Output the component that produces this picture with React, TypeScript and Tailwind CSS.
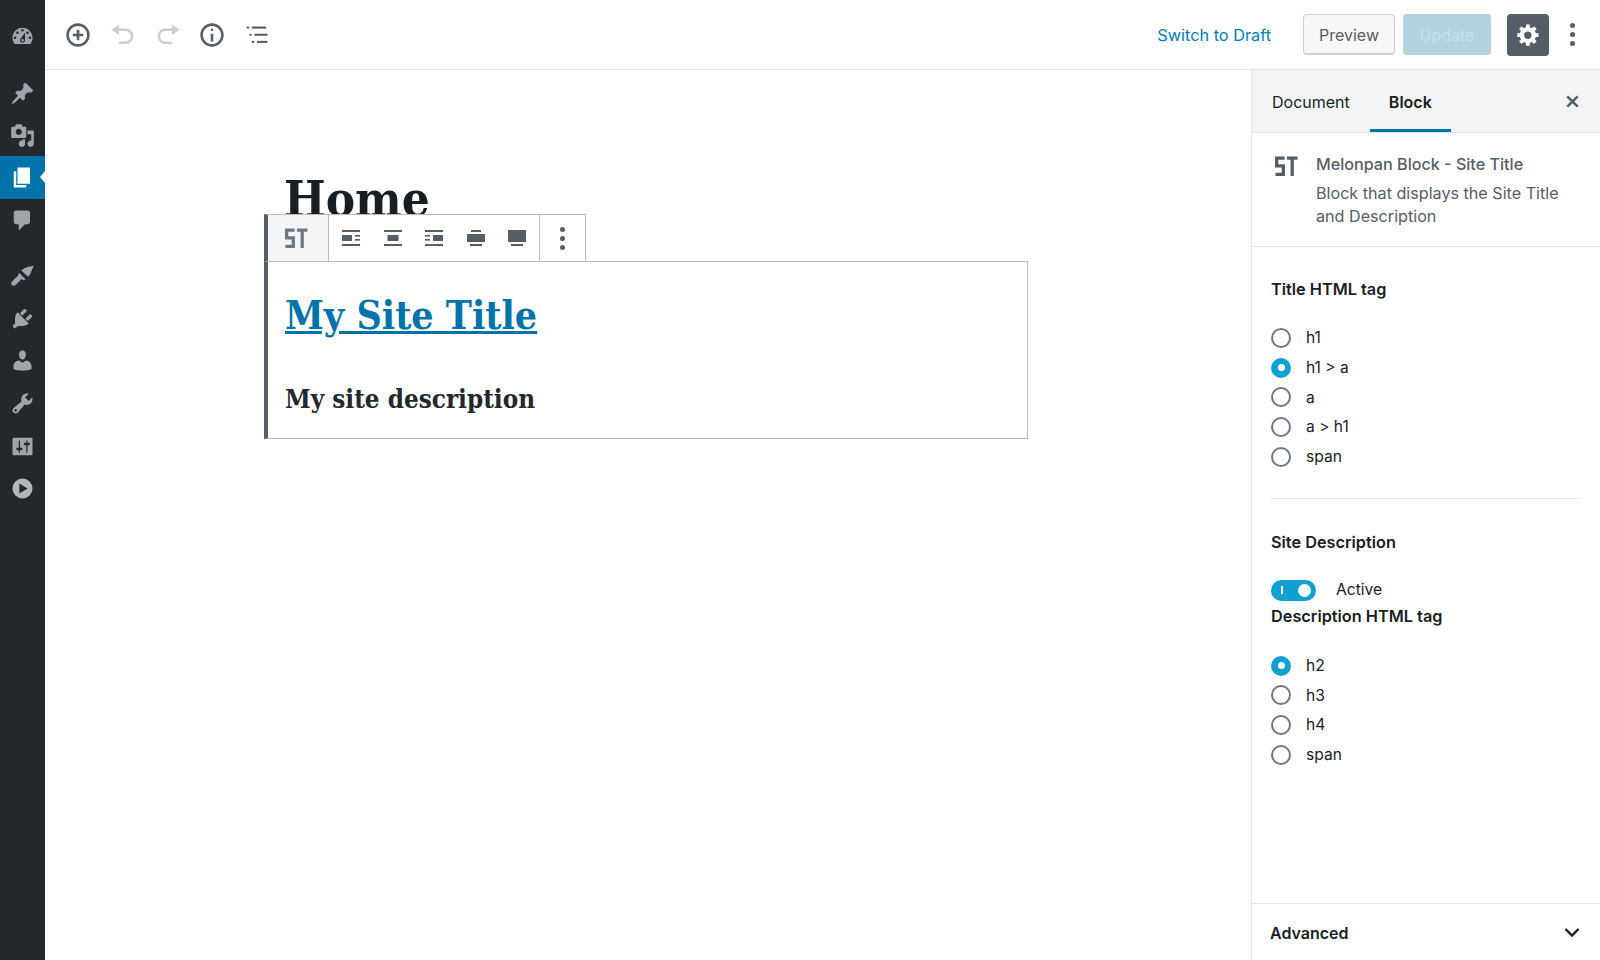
const menuTop = [
  { d: "M13 11V4c0-.55-.45-1-1-1h-1.67L9 1H5L3.67 3H2c-.55 0-1 .45-1 1v7c0 .55.45 1 1 1h10c.55 0 1-.45 1-1zM7 4.5c1.38 0 2.5 1.12 2.5 2.5S8.38 9.5 7 9.5 4.5 8.38 4.5 7 5.62 4.5 7 4.5zM14 6h5v10.5c0 1.38-1.12 2.5-2.5 2.5S14 17.88 14 16.5s1.12-2.5 2.5-2.5c.17 0 .34.02.5.05V9h-3V6zm-4 8.05V13h2v3.5c0 1.38-1.12 2.5-2.5 2.5S7 17.88 7 16.5 8.12 14 9.5 14c.17 0 .34.02.5.05z", h: "h-[42px]" },
  { d: "M6 15V2h10v13H6zm-1 1h8v2H3V5h2v11z", active: true, h: "h-[43px]" },
  { d: "M5 2h9c1.1 0 2 .9 2 2v7c0 1.1-.9 2-2 2h-2l-5 5v-5H5c-1.1 0-2-.9-2-2V4c0-1.1.9-2 2-2z", h: "h-[42px]" },
];

const menuBottom = [
  "M9 6C11 4 12 4 13 3.500C15 2.600 17 3 19 2C18.500 4 17.500 5.500 17 7C16.500 8.500 16 9 14.500 11zM7.200 7.800L12.600 13.200L10.600 13.800L9.200 12.800L4.500 17.500C3.600 18.400 2.200 18.300 1.500 17.500C.8 16.700.9 15.400 1.800 14.600L6.500 10z",
  "M13.11 4.36L9.87 7.6 8 5.73l3.24-3.24c.35-.34 1.05-.2 1.56.32.52.51.66 1.21.31 1.55zm-8 1.77l.91-1.12 9.01 9.01-1.19.84c-.71.71-2.63 1.16-3.82 1.16H6.14L4.9 17.26c-.59.59-1.54.59-2.12 0-.59-.58-.59-1.53 0-2.12l1.24-1.24v-3.88c0-1.13.4-3.19 1.09-3.89zm7.26 3.97l3.24-3.24c.34-.35 1.04-.21 1.55.31.52.51.66 1.21.31 1.55l-3.24 3.25z",
  "M10 9.25c-2.27 0-2.73-3.44-2.73-3.44C7 4.02 7.82 2 9.97 2c2.16 0 2.98 2.02 2.71 3.81 0 0-.41 3.44-2.68 3.44zm0 2.57L12.72 10c2.39 0 4.52 2.33 4.52 4.53v2.49s-3.65 1.13-7.24 1.13c-3.65 0-7.24-1.13-7.24-1.13v-2.49c0-2.25 1.94-4.48 4.47-4.48z",
  "M16.68 9.77c-1.34 1.34-3.3 1.67-4.95.99l-5.41 6.52c-.99.99-2.59.99-3.58 0s-.99-2.59 0-3.57l6.52-5.42c-.68-1.65-.35-3.61.99-4.95 1.28-1.28 3.12-1.62 4.72-1.06l-2.89 2.89 2.82 2.82 2.86-2.87c.53 1.58.18 3.39-1.08 4.65zM3.81 16.21c.4.39 1.04.39 1.43 0 .4-.4.4-1.04 0-1.43-.39-.4-1.03-.4-1.43 0-.39.39-.39 1.03 0 1.43z",
  "M18 16V4c0-.55-.45-1-1-1H3c-.55 0-1 .45-1 1v12c0 .55.45 1 1 1h14c.55 0 1-.45 1-1zM8 11h1c.55 0 1 .45 1 1s-.45 1-1 1H8v1.5c0 .28-.22.5-.5.5s-.5-.22-.5-.5V13H6c-.55 0-1-.45-1-1s.45-1 1-1h1V5.5c0-.28.22-.5.5-.5s.5.22.5.5V11zm5-2h-1c-.55 0-1-.45-1-1s.45-1 1-1h1V5.5c0-.28.22-.5.5-.5s.5.22.5.5V7h1c.55 0 1 .45 1 1s-.45 1-1 1h-1v5.5c0 .28-.22.5-.5.5s-.5-.22-.5-.5V9z",
];

function Dash({ d, className }: { d: string; className: string }) {
  return (
    <svg viewBox="0 0 20 20" fill="currentColor" className={className}>
      <path d={d} />
    </svg>
  );
}

// block logo of the plugin
function StLogo({ className }: { className: string }) {
  return (
    <svg viewBox="0 0 24 22" fill="none" stroke="currentColor" strokeWidth="3.4" className={className}>
      <path d="M10.5 2.2H2.2v8.2h7v8.9H1" />
      <path d="M13 2.2h11M18.500 2.200V21" />
    </svg>
  );
}

// the five block alignment buttons
function AlignIcon({ kind }: { kind: number }) {
  return (
    <svg viewBox="0 0 18 16" fill="#555d66" className="h-[16px] w-[18px]">
      {kind < 3 && <rect x="0" y="0" width="18" height="2" />}
      {kind === 3 && <rect x="4" y="0" width="10" height="2" />}
      {kind === 0 && (
        <>
          <rect x="0" y="5" width="10" height="6" />
          <rect x="13" y="5" width="5" height="1.6" />
          <rect x="13" y="9" width="5" height="1.6" />
        </>
      )}
      {kind === 1 && <rect x="3.5" y="5" width="11" height="6" />}
      {kind === 2 && (
        <>
          <rect x="8" y="5" width="10" height="6" />
          <rect x="0" y="5" width="5" height="1.6" />
          <rect x="0" y="9" width="5" height="1.6" />
        </>
      )}
      {kind === 3 && <rect x="0" y="4" width="18" height="8" />}
      {kind === 4 && <rect x="0" y="0" width="18" height="12" />}
      {kind < 3 && <rect x="0" y="14" width="18" height="2" />}
      {kind >= 3 && <rect x="3" y="14" width="12" height="2" />}
    </svg>
  );
}

function Radio({ label, checked }: { label: string; checked?: boolean }) {
  return (
    <div className="flex h-[29.7px] items-center gap-[15px] text-[15.6px] text-[#191e23]">
      {checked ? (
        <span className="flex h-[20px] w-[20px] items-center justify-center rounded-full bg-[#11a0d2]">
          <span className="h-[7px] w-[7px] rounded-full bg-white" />
        </span>
      ) : (
        <span className="h-[20px] w-[20px] rounded-full border-2 border-[#6c7781]" />
      )}
      <span>{label}</span>
    </div>
  );
}

export default function App() {
  return (
    <div className="flex h-[960px] w-[1600px] overflow-hidden bg-white font-['Inter',sans-serif] text-[#191e23]">
      {/* Admin menu */}
      <div className="flex w-[45px] flex-col bg-[#23282d] pt-[15px] text-[#a0a5aa]">
        <div className="flex h-[42px] items-center justify-center">
          <Dash
            className="h-[25px] w-[25px]"
            d="M3.76 16h12.48c1.1-1.37 1.76-3.11 1.76-5 0-4.42-3.58-8-8-8s-8 3.58-8 8c0 1.89.66 3.63 1.76 5zM10 4c.55 0 1 .45 1 1s-.45 1-1 1-1-.45-1-1 .45-1 1-1zM6 6c.55 0 1 .45 1 1s-.45 1-1 1-1-.45-1-1 .45-1 1-1zm8 0c.55 0 1 .45 1 1s-.45 1-1 1-1-.45-1-1 .45-1 1-1zm-5.37 5.55L12 7v6c0 1.1-.9 2-2 2s-2-.9-2-2c0-.57.24-1.08.63-1.45zM4 10c.55 0 1 .45 1 1s-.45 1-1 1-1-.45-1-1 .45-1 1-1zm12 0c.55 0 1 .45 1 1s-.45 1-1 1-1-.45-1-1 .45-1 1-1zm-5 3c0-.55-.45-1-1-1s-1 .45-1 1 .45 1 1 1 1-.45 1-1z"
          />
        </div>
        <div className="mt-[15px] flex h-[42px] items-center justify-center">
          <Dash
            className="h-[25px] w-[25px]"
            d="M10.44 3.02l1.82-1.82 6.36 6.35-1.83 1.82c-1.05-.68-2.48-.57-3.41.36l-.75.75c-.92.93-1.04 2.35-.35 3.41l-1.83 1.82-2.41-2.41-2.8 2.79c-.42.42-3.38 2.71-3.8 2.29s1.86-3.39 2.28-3.81l2.79-2.79L4.1 9.36l1.83-1.82c1.05.69 2.48.57 3.4-.36l.75-.75c.93-.92 1.05-2.35.36-3.41z"
          />
        </div>
        {menuTop.map((item, i) => (
          <div
            key={i}
            className={`relative flex items-center justify-center ${item.h} ${item.active ? "bg-[#0073aa] text-white" : ""}`}
          >
            <Dash className="h-[25px] w-[25px]" d={item.d} />
            {item.active && (
              <span className="absolute right-0 top-[15px] h-0 w-0 border-y-[6px] border-r-[5px] border-y-transparent border-r-white" />
            )}
          </div>
        ))}
        <div className="h-[13px]" />
        {menuBottom.map((d, i) => (
          <div key={i} className="flex h-[42.75px] items-center justify-center">
            <Dash className="h-[25px] w-[25px]" d={d} />
          </div>
        ))}
        <div className="flex h-[42px] items-center justify-center">
          <svg viewBox="0 0 20 20" className="h-[25px] w-[25px]">
            <circle cx="10" cy="10" r="8" fill="#b4b7ba" />
            <path d="M7.5 6l6.5 4-6.5 4z" fill="#23282d" />
          </svg>
        </div>
      </div>

      <div className="flex min-w-0 flex-1 flex-col">
        {/* Top bar */}
        <div className="flex h-[70px] items-center border-b border-[#e2e4e7] pl-[20px] pr-[25px]">
          <div className="flex items-center gap-[18.8px] text-[#555d66]">
            <Dash
              className="h-[26px] w-[26px]"
              d="M10 1c-5 0-9 4-9 9s4 9 9 9 9-4 9-9-4-9-9-9zm0 16c-3.9 0-7-3.1-7-7s3.1-7 7-7 7 3.1 7 7-3.1 7-7 7zm1-11H9v3H6v2h3v3h2v-3h3V9h-3V6z"
            />
            <Dash
              className="h-[26px] w-[26px] text-[#ccd0d4]"
              d="M12 5H7V2L1 6l6 4V7h5c2.2 0 4 1.8 4 4s-1.8 4-4 4H7v2h5c3.3 0 6-2.7 6-6s-2.7-6-6-6z"
            />
            <Dash
              className="h-[26px] w-[26px] text-[#ccd0d4]"
              d="M8 5h5V2l6 4-6 4V7H8c-2.2 0-4 1.8-4 4s1.8 4 4 4h5v2H8c-3.3 0-6-2.7-6-6s2.7-6 6-6z"
            />
            <Dash
              className="h-[26px] w-[26px]"
              d="M10 1c-5 0-9 4-9 9s4 9 9 9 9-4 9-9-4-9-9-9zm0 16c-3.9 0-7-3.1-7-7s3.1-7 7-7 7 3.1 7 7-3.1 7-7 7zM11 6c0 .55-.45 1-1 1s-1-.45-1-1 .45-1 1-1 1 .45 1 1zm0 9H9V9h2v6z"
            />
            <svg viewBox="0 0 20 20" fill="#555d66" className="h-[26px] w-[26px]">
              <rect x="2" y="3.5" width="2" height="1.6" rx=".8" />
              <rect x="6" y="3.5" width="11" height="1.6" />
              <rect x="4" y="9" width="2" height="1.6" rx=".8" />
              <rect x="8" y="9" width="10" height="1.6" />
              <rect x="6" y="14.5" width="2" height="1.6" rx=".8" />
              <rect x="10" y="14.5" width="8" height="1.6" />
            </svg>
          </div>
          <div className="ml-auto flex items-center">
            <span className="mr-[32px] pt-[2px] text-[16.3px] text-[#007cba]">Switch to Draft</span>
            <span className="mr-[8px] flex h-[41px] w-[92px] items-center justify-center rounded-[4px] border border-b-2 border-[#ccd0d4] bg-[#f7f7f7] pt-[2px] text-[16px] text-[#555d66]">
              Preview
            </span>
            <span className="mr-[16px] flex h-[41px] w-[88px] items-center justify-center rounded-[4px] bg-[#b4d1de] pt-[1px] text-[16px] text-[#c7e0ea]">
              Update
            </span>
            <span className="mr-[21px] flex h-[42px] w-[42px] items-center justify-center rounded-[4px] bg-[#555d66] text-white">
              <Dash
                className="h-[25px] w-[25px]"
                d="M18 12h-2.18c-.17.7-.44 1.35-.81 1.93l1.54 1.54-2.1 2.1-1.54-1.54c-.58.36-1.23.63-1.91.79V19H8v-2.18c-.68-.16-1.33-.43-1.91-.79l-1.54 1.54-2.12-2.12 1.54-1.54c-.36-.58-.63-1.23-.79-1.91H1V9.03h2.17c.16-.7.44-1.35.8-1.94L2.43 5.55l2.1-2.1 1.54 1.54c.58-.37 1.24-.64 1.93-.81V2h3v2.18c.68.16 1.33.43 1.91.79l1.54-1.54 2.12 2.12-1.54 1.54c.36.59.64 1.24.8 1.94H18V12zm-8.5 1.5c1.66 0 3-1.34 3-3s-1.34-3-3-3-3 1.34-3 3 1.34 3 3 3z"
              />
            </span>
            <span className="flex flex-col gap-[4px]">
              <span className="h-[5px] w-[5px] rounded-full bg-[#555d66]" />
              <span className="h-[5px] w-[5px] rounded-full bg-[#555d66]" />
              <span className="h-[5px] w-[5px] rounded-full bg-[#555d66]" />
            </span>
          </div>
        </div>

        <div className="flex min-h-0 flex-1">
          {/* Editor canvas */}
          <div className="min-w-0 flex-1 pl-[219px] pt-[100px]">
            <h1 className="ml-[20px] h-[91px] font-['DejaVu_Serif_Condensed','Liberation_Serif',serif] text-[49px] font-bold leading-[58px] text-[#191e23]">
              Home
            </h1>
            <div className="relative w-[764px] border border-l-[4px] border-[#b5bcc2] border-l-[#555d66] pb-[21px] pl-[17px] pt-[26px]">
              {/* Block toolbar */}
              <div className="absolute -left-[4px] -top-[48px] flex h-[47px] w-[322px] border border-b-0 border-l-[4px] border-[#b5bcc2] border-l-[#555d66] bg-white">
                <div className="flex w-[61px] items-center justify-center border-r border-[#b5bcc2] bg-[#f3f4f5] pr-[5px] text-[#6c7781]">
                  <StLogo className="h-[21px] w-[24px]" />
                </div>
                <div className="flex w-[211px] items-center justify-center gap-[23.5px] border-r border-[#b5bcc2]">
                  {[0, 1, 2, 3, 4].map((k) => (
                    <AlignIcon key={k} kind={k} />
                  ))}
                </div>
                <div className="flex flex-1 flex-col items-center justify-center gap-[4px]">
                  <span className="h-[5px] w-[5px] rounded-full bg-[#555d66]" />
                  <span className="h-[5px] w-[5px] rounded-full bg-[#555d66]" />
                  <span className="h-[5px] w-[5px] rounded-full bg-[#555d66]" />
                </div>
              </div>
              <a className="font-['DejaVu_Serif_Condensed','Liberation_Serif',serif] text-[39px] font-bold leading-[54px] text-[#0073aa] underline">
                My Site Title
              </a>
              <h2 className="mt-[39px] font-['DejaVu_Serif_Condensed','Liberation_Serif',serif] text-[25.800px] font-bold leading-[36px] text-[#23282d]">
                My site description
              </h2>
            </div>
          </div>

          {/* Settings sidebar */}
          <div className="flex w-[349px] flex-col border-l border-[#e2e4e7]">
            <div className="flex h-[63px] items-stretch border-b border-[#e2e4e7] bg-[#f3f4f5] pl-[20px] pr-[18px] text-[16px]">
              <span className="flex items-center pt-[1px]">Document</span>
              <span className="ml-[20px] flex w-[81px] items-center justify-center border-b-[3px] border-[#0073aa] pt-[4px] font-semibold">
                Block
              </span>
              <span className="ml-auto flex items-center text-[#555d66]">
                <svg viewBox="0 0 20 20" fill="none" stroke="currentColor" strokeWidth="2.6" className="h-[19px] w-[19px]">
                  <path d="M4.5 4.5l11 11M15.5 4.5l-11 11" />
                </svg>
              </span>
            </div>

            <div className="flex h-[114px] border-b border-[#e2e4e7] pl-[22px] pt-[20px] text-[#555d66]">
              <StLogo className="mt-[3px] h-[21px] w-[24px]" />
              <div className="ml-[18px] text-[16.15px] leading-[23px]">
                <div className="mb-[6px] font-medium">Melonpan Block - Site Title</div>
                <div>Block that displays the Site Title</div>
                <div>and Description</div>
              </div>
            </div>

            <div className="flex-1 pl-[19px] pr-[20px] pt-[31px]">
              <div className="text-[16.3px] font-semibold leading-[22px]">Title HTML tag</div>
              <div className="mt-[23px]">
                <Radio label="h1" />
                <Radio label="h1 > a" checked />
                <Radio label="a" />
                <Radio label="a > h1" />
                <Radio label="span" />
              </div>
              <div className="mt-[27px] h-px bg-[#e2e4e7]" />
              <div className="mt-[32px] text-[16.3px] font-semibold leading-[22px]">Site Description</div>
              <div className="mt-[25px] flex items-center gap-[20px]">
                <span className="relative block h-[21px] w-[45px] rounded-full bg-[#11a0d2]">
                  <span className="absolute left-[10px] top-[6.5px] h-[8px] w-[2px] bg-white" />
                  <span className="absolute right-[5px] top-[4px] h-[13px] w-[13px] rounded-full bg-white" />
                </span>
                <span className="text-[15.6px]">Active</span>
              </div>
              <div className="mt-[3px] text-[16.3px] font-semibold leading-[22px]">Description HTML tag</div>
              <div className="mt-[24px]">
                <Radio label="h2" checked />
                <Radio label="h3" />
                <Radio label="h4" />
                <Radio label="span" />
              </div>
            </div>

            <div className="flex h-[57px] items-center justify-between border-t border-[#e2e4e7] pl-[18px] pr-[18px]">
              <span className="pt-[1px] text-[16px] font-semibold">Advanced</span>
              <svg viewBox="0 0 20 20" fill="none" stroke="#191e23" strokeWidth="2.4" className="h-[20px] w-[20px]">
                <path d="M3.5 7l6.5 6.5L16.5 7" />
              </svg>
            </div>
          </div>
        </div>
      </div>
    </div>
  );
}
